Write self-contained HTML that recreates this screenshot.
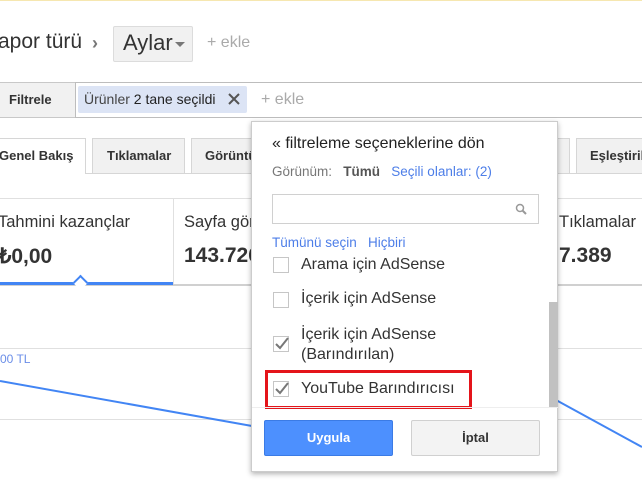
<!DOCTYPE html>
<html><head><meta charset="utf-8"><style>
*{box-sizing:border-box;margin:0;padding:0}
body{width:642px;height:480px;overflow:hidden;background:#fff;font-family:"Liberation Sans",Arial,sans-serif;position:relative;color:#222}
.a{position:absolute}
.tab{position:absolute;top:138px;height:35px;background:#f1f1f1;border:1px solid #d6d6d6;border-bottom:none;font-size:13px;font-weight:bold;color:#333;line-height:34px;padding-left:8px}
.cb{position:absolute;left:273px;width:16px;height:16px;border:1px solid #c6c6c6;background:#fff}
.it{position:absolute;left:301px;font-size:16px;color:#333}
</style></head><body>
<div class="a" style="left:0;top:0;width:642px;height:1px;background:#f6e7b0"></div>
<div class="a" style="left:-2px;top:30px;font-size:21px;color:#333">apor türü</div>
<div class="a" style="left:92px;top:33px;font-size:18px;color:#777;font-weight:bold">›</div>
<div class="a" style="left:113px;top:26px;width:80px;height:36px;background:#f1f1f1;border:1px solid #dcdcdc;border-radius:2px"></div>
<div class="a" style="left:123px;top:30px;font-size:22px;color:#333">Aylar</div>
<div class="a" style="left:175px;top:42px;width:0;height:0;border-left:5px solid transparent;border-right:5px solid transparent;border-top:5px solid #777"></div>
<div class="a" style="left:207px;top:34px;font-size:16px;color:#aaa">+ ekle</div>

<div class="a" style="left:0;top:82px;width:76px;height:36px;background:#f1f1f1;border:1px solid #c8c8c8;border-left:none"></div>
<div class="a" style="left:9px;top:92px;font-size:13px;font-weight:bold;color:#333">Filtrele</div>
<div class="a" style="left:75px;top:82px;width:570px;height:36px;border:1px solid #bdbdbd"></div>
<div class="a" style="left:78px;top:86px;width:169px;height:27px;background:#dce4f5;border-radius:2px"></div>
<div class="a" style="left:84px;top:91px;font-size:14px;color:#444">Ürünler <span style="color:#222">2 tane seçildi</span></div>
<svg class="a" style="left:228px;top:93px" width="12" height="12"><path d="M1 1L11 11M11 1L1 11" stroke="#555" stroke-width="2"/></svg>
<div class="a" style="left:261px;top:91px;font-size:16px;color:#aaa">+ ekle</div>

<div class="a" style="left:0;top:173px;width:642px;height:1px;background:#d6d6d6"></div>
<div class="tab" style="left:-2px;width:88px;background:#fff;height:36px;padding-left:0">Genel Bakış</div>
<div class="tab" style="left:92px;width:93px;padding-left:14px">Tıklamalar</div>
<div class="tab" style="left:191px;width:70px;padding-left:13px">Görüntü</div>
<div class="tab" style="left:520px;width:50px"></div>
<div class="tab" style="left:576px;width:70px;padding-left:13px">Eşleştiril</div>

<div class="a" style="left:0;top:198px;width:642px;height:1px;background:#e0e0e0"></div>
<div class="a" style="left:173px;top:198px;width:1px;height:86px;background:#e0e0e0"></div>
<div class="a" style="left:0;top:284px;width:642px;height:2px;background:#d0d0d0"></div>
<div class="a" style="left:0;top:282px;width:173px;height:3px;background:#4285f4"></div>
<div class="a" style="left:75px;top:277px;width:11px;height:11px;background:#fff;border-left:2px solid #4285f4;border-top:2px solid #4285f4;transform:rotate(45deg)"></div>
<div class="a" style="left:-2px;top:213px;font-size:16.5px;color:#333">Tahmini kazançlar</div>
<div class="a" style="left:-2px;top:244px;font-size:21px;font-weight:bold;color:#333">₺0,00</div>
<div class="a" style="left:184px;top:213px;font-size:16.5px;color:#333">Sayfa gör</div>
<div class="a" style="left:184px;top:244px;font-size:21px;font-weight:bold;color:#333">143.726</div>
<div class="a" style="left:559px;top:213px;font-size:16.5px;color:#333">Tıklamalar</div>
<div class="a" style="left:559px;top:244px;font-size:21px;font-weight:bold;color:#333">7.389</div>

<div class="a" style="left:0;top:348px;width:642px;height:1px;background:#e0e0e0"></div>
<div class="a" style="left:0;top:419px;width:642px;height:1px;background:#e0e0e0"></div>
<div class="a" style="left:0;top:352px;font-size:12px;color:#6b8ee8">00 TL</div>
<svg class="a" style="left:0;top:0" width="642" height="480"><line x1="0" y1="381" x2="252" y2="426" stroke="#4285f4" stroke-width="2"/><line x1="556" y1="400" x2="642" y2="447" stroke="#4285f4" stroke-width="2"/></svg>

<div class="a" style="left:251px;top:121px;width:307px;height:351px;background:#fff;border:1px solid #ccc;box-shadow:0 2px 5px rgba(0,0,0,.3)"></div>
<div class="a" style="left:272px;top:135px;font-size:16px;color:#222">« filtreleme seçeneklerine dön</div>
<div class="a" style="left:272px;top:164px;font-size:13.5px;color:#777">Görünüm:&nbsp;&nbsp; <b style="color:#555">Tümü</b>&nbsp;&nbsp; <span style="color:#4d7ee8">Seçili olanlar: (2)</span></div>
<div class="a" style="left:272px;top:194px;width:267px;height:30px;border:1px solid #d0d0d0"></div>
<svg class="a" style="left:515px;top:203px" width="12" height="12"><circle cx="5" cy="5" r="3.5" fill="none" stroke="#999" stroke-width="1.5"/><line x1="7.5" y1="7.5" x2="11" y2="11" stroke="#999" stroke-width="2"/></svg>
<div class="a" style="left:272px;top:235px;font-size:13.5px;color:#4d7ee8">Tümünü seçin&nbsp;&nbsp; Hiçbiri</div>
<div class="cb" style="top:257px"></div><div class="it" style="top:256px">Arama için AdSense</div>
<div class="cb" style="top:292px"></div><div class="it" style="top:290px">İçerik için AdSense</div>
<div class="cb" style="top:336px"></div><div class="it" style="top:325px;line-height:20px">İçerik için AdSense<br>(Barındırılan)</div>
<div class="cb" style="top:381px"></div><div class="it" style="top:380px">YouTube Barındırıcısı</div>
<svg class="a" style="left:273px;top:335px" width="18" height="60"><path d="M3 9l4 4 8-10" fill="none" stroke="#777" stroke-width="2"/><path d="M3 54l4 4 8-10" fill="none" stroke="#777" stroke-width="2"/></svg>
<div class="a" style="left:265px;top:370px;width:207px;height:39px;border:3px solid #e4141a"></div>
<div class="a" style="left:549px;top:302px;width:9px;height:105px;background:#c1c1c1"></div>
<div class="a" style="left:252px;top:407px;width:306px;height:1px;background:#eee"></div>
<div class="a" style="left:264px;top:420px;width:129px;height:36px;background:#4d90fe;border:1px solid #3b7be5;border-radius:2px;color:#fff;font-weight:bold;font-size:13px;text-align:center;line-height:34px">Uygula</div>
<div class="a" style="left:411px;top:420px;width:129px;height:36px;background:#f3f3f3;border:1px solid #d0d0d0;border-radius:2px;color:#333;font-weight:bold;font-size:13px;text-align:center;line-height:34px">İptal</div>
</body></html>
